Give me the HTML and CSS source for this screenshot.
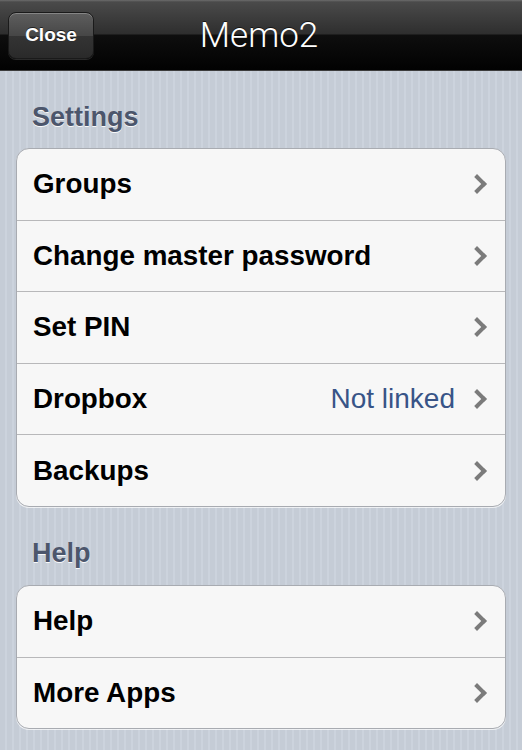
FILE: index.html
```html
<!DOCTYPE html>
<html>
<head>
<meta charset="utf-8">
<link rel="stylesheet" href="styles.css">
</head>
<body>
<div class="nav">
  <div class="nav-left"><button class="close-btn">Close</button></div>
  <div class="nav-title">Memo2</div>
  <div class="nav-right"></div>
</div>
<div class="content">
  <div class="section-title">Settings</div>
  <div class="group">
    <div class="row"><span class="label">Groups</span><span class="chev"></span></div>
    <div class="row"><span class="label">Change master password</span><span class="chev"></span></div>
    <div class="row"><span class="label">Set PIN</span><span class="chev"></span></div>
    <div class="row"><span class="label">Dropbox</span><span class="value">Not linked</span><span class="chev"></span></div>
    <div class="row"><span class="label">Backups</span><span class="chev"></span></div>
  </div>
  <div class="section-title second">Help</div>
  <div class="group">
    <div class="row"><span class="label">Help</span><span class="chev"></span></div>
    <div class="row"><span class="label">More Apps</span><span class="chev"></span></div>
  </div>
</div>
</body>
</html>
```
FILE: styles.css
```css
html, body {
  margin: 0;
  padding: 0;
}
body {
  width: 522px;
  height: 750px;
  overflow: hidden;
  font-family: "Liberation Sans", Arial, sans-serif;
  background-color: #c6cdd7;
  background-image: repeating-linear-gradient(90deg, #c5ccd6 0px, #c5ccd6 5px, #ccd3dd 5px, #ccd3dd 7px);
}
.nav {
  height: 71px;
  display: grid;
  grid-template-columns: 1fr auto 1fr;
  align-items: center;
  background: linear-gradient(#6c6c6c 0px, #4a4a4a 2px, #2e2e2e 34px, #0e0e0e 35px, #020202 69px);
  border-bottom: 1px solid #3c3c3c;
  box-sizing: border-box;
}
.nav-left {
  padding-left: 8px;
}
.close-btn {
  display: block;
  width: 86px;
  height: 47px;
  border-radius: 8px;
  border: 1px solid #1a1a1a;
  background: linear-gradient(#5e5e5e 0%, #474747 50%, #343434 51%, #2a2a2a 100%);
  box-shadow: inset 0 1px 0 rgba(255,255,255,0.25), 0 1px 0 rgba(255,255,255,0.15);
  color: #fff;
  font-family: "Liberation Sans", Arial, sans-serif;
  font-weight: bold;
  font-size: 19px;
  text-shadow: 0 -1px 0 rgba(0,0,0,0.6);
  padding: 0 0 2px 0;
  margin-top: 1px;
}
.nav-title {
  font-family: Roboto, "Liberation Sans", sans-serif;
  font-weight: 300;
  font-size: 35px;
  color: #fff;
  text-shadow: 0 -1px 0 rgba(0,0,0,0.6);
  margin-right: 4px;
}
.content {
  padding: 0 16px;
}
.section-title {
  font-weight: bold;
  font-size: 27px;
  color: #4c566c;
  text-shadow: 0 1px 0 rgba(255,255,255,0.9);
  padding: 31px 0 0 16px;
  height: 77px;
  box-sizing: border-box;
  line-height: 30px;
}
.section-title.second {
  padding-top: 31px;
  height: 78px;
}
.group {
  background: #f7f7f7;
  border: 1px solid #a8abb1;
  border-radius: 13px;
  box-shadow: 0 1px 0 rgba(255,255,255,0.7);
  overflow: hidden;
}
.row {
  height: 70.6px;
  display: flex;
  align-items: center;
  padding: 0 18px 0 16px;
  border-top: 1px solid #b8b8ba;
}
.row:first-child {
  border-top: none;
}
.label {
  flex: 1;
  font-weight: bold;
  font-size: 27.8px;
  color: #000;
}
.value {
  font-size: 28px;
  color: #385487;
  margin-right: 15px;
}
.chev {
  width: 10px;
  height: 10px;
  border-right: 4px solid #7b7b7b;
  border-top: 4px solid #7b7b7b;
  transform: rotate(45deg);
  margin-right: 3px;
}
```
